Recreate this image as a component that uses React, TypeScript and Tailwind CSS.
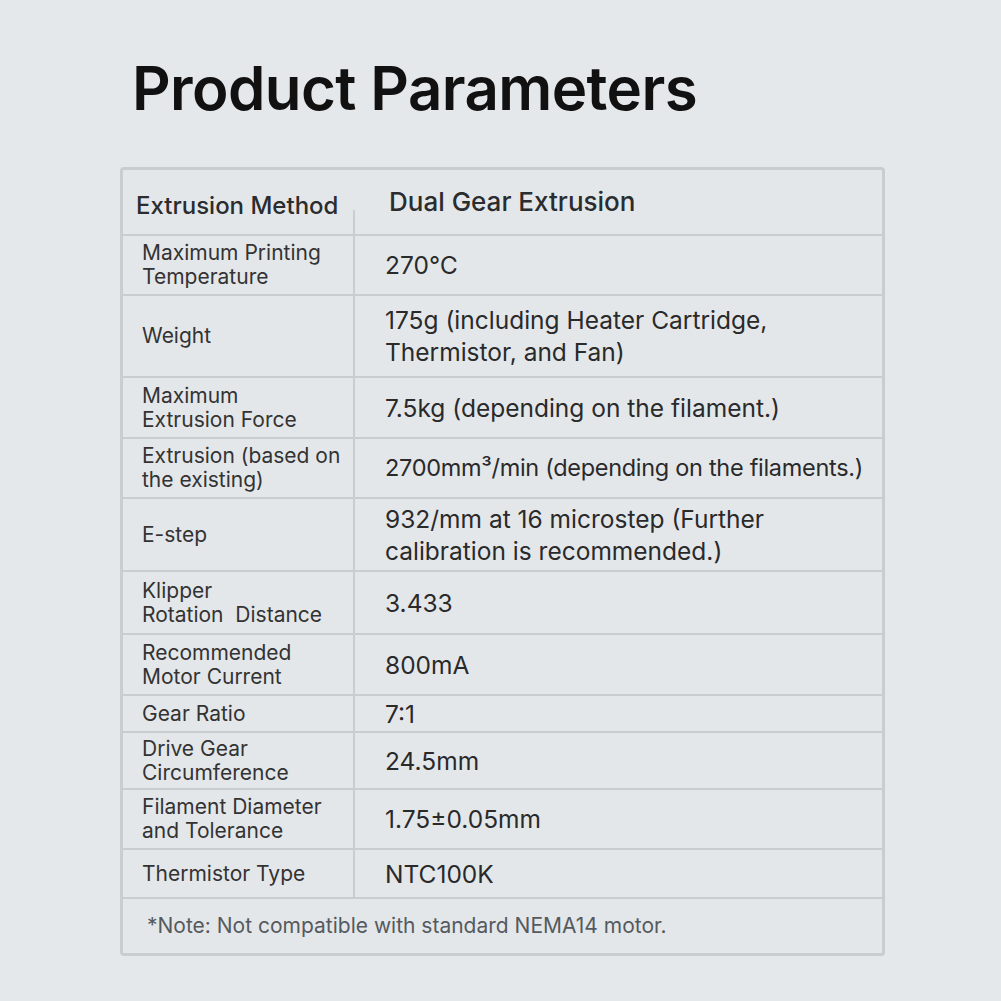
import React from 'react';

type Row = { label: string[]; value: string[]; h: string; tight?: boolean };

const rows: Row[] = [
  { label: ['Maximum Printing', 'Temperature'], value: ['270℃'], h: 'h-[60px]' },
  { label: ['Weight'], value: ['175g (including Heater Cartridge,', 'Thermistor, and Fan)'], h: 'h-[82px]' },
  { label: ['Maximum', 'Extrusion Force'], value: ['7.5kg (depending on the filament.)'], h: 'h-[61px]' },
  { label: ['Extrusion (based on', 'the existing)'], value: ['2700mm³/min (depending on the filaments.)'], h: 'h-[60px]', tight: true },
  { label: ['E-step'], value: ['932/mm at 16 microstep (Further', 'calibration is recommended.)'], h: 'h-[73px]' },
  { label: ['Klipper', 'Rotation\u00a0 Distance'], value: ['3.433'], h: 'h-[63px]' },
  { label: ['Recommended', 'Motor Current'], value: ['800mA'], h: 'h-[61px]' },
  { label: ['Gear Ratio'], value: ['7:1'], h: 'h-[37px]' },
  { label: ['Drive Gear', 'Circumference'], value: ['24.5mm'], h: 'h-[57px]' },
  { label: ['Filament Diameter', 'and Tolerance'], value: ['1.75±0.05mm'], h: 'h-[60px]' },
  { label: ['Thermistor Type'], value: ['NTC100K'], h: 'h-[49px]' },
];

export default function App() {
  return (
    <div className="w-[1001px] h-[1001px] bg-[#e5e8eb] font-['Inter',sans-serif] text-[#2a2c2e] overflow-hidden">
      <h1 className="pl-[132px] pt-[52px] text-[60px] leading-[72px] font-semibold tracking-[-0.6px] text-[#111]">
        Product Parameters
      </h1>

      <div className="ml-[120px] mt-[43px] w-[765px] border-[3px] border-[#c8cdd2] rounded-[4px] bg-[#e4e7ea]">
        {/* header */}
        <div className="flex h-[66px] border-b-2 border-[#c8cdd2]">
          <div className="w-[232px] relative flex items-end pb-[10px] pl-[13px] text-[24px] font-medium">
            Extrusion Method
            <span className="absolute right-0 bottom-0 h-[24px] w-[2px] bg-[#c8cdd2]" />
          </div>
          <div className="flex-1 flex items-center pl-[34px] pb-[2px] text-[26px] font-medium">
            Dual Gear Extrusion
          </div>
        </div>

        {rows.map((r, i) => (
          <div key={i} className={`flex border-b-2 border-[#c8cdd2] ${r.h}`}>
            <div className="w-[232px] shrink-0 border-r-2 border-[#c8cdd2] flex flex-col justify-center pl-[19px] text-[21px] leading-[24px] text-[#333]">
              {r.label.map((l, j) => (
                <span key={j} className="whitespace-pre">{l}</span>
              ))}
            </div>
            <div className={`flex-1 flex flex-col justify-center pl-[30px] leading-[32px] text-[#2a2a2a] ${r.tight ? 'text-[23.5px] tracking-[-0.3px]' : 'text-[24.5px]'}`}>
              {r.value.map((v, j) => (
                <span key={j} className="whitespace-nowrap">{v}</span>
              ))}
            </div>
          </div>
        ))}

        <div className="h-[54px] flex items-center pl-[24px] text-[21px] text-[#555a5e]">
          *Note: Not compatible with standard NEMA14 motor.
        </div>
      </div>
    </div>
  );
}
